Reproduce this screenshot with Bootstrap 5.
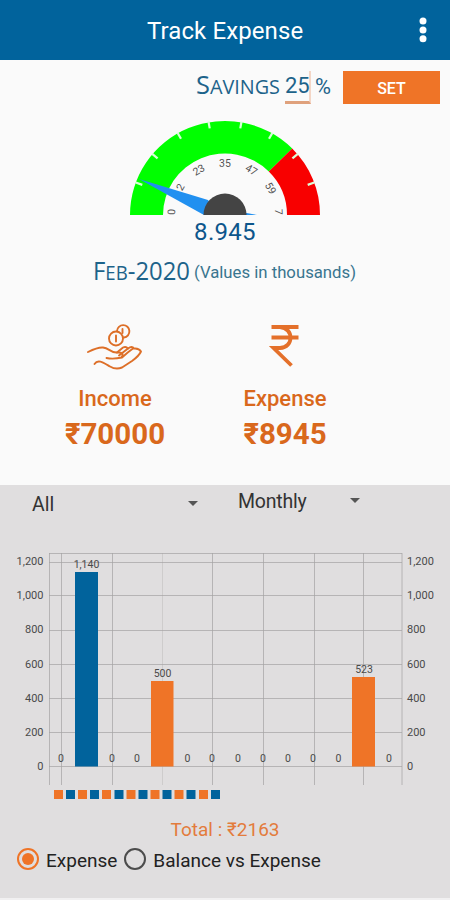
<!DOCTYPE html>
<html lang="en">
<head>
<meta charset="utf-8">
<meta name="viewport" content="width=device-width, initial-scale=1">
<title>Track Expense</title>
<link rel="stylesheet" href="https://cdn.jsdelivr.net/npm/bootstrap@5.3.0/dist/css/bootstrap.min.css">
<style>
:root { --blue: #01639c; --orange: #ef7427; --ink: #d9681c; }
body { font-family: Roboto, "Noto Sans", sans-serif; background: #fafafa; width: 450px; height: 900px; overflow: hidden; line-height: 1; }
svg { display: block; flex: none; overflow: visible; }
.appbar { height: 60px; background: var(--blue); padding: 0 22px 0 147px; }
.appbar h1 { font-size: 24px; letter-spacing: .1px; line-height: 60px; padding-top: 1px; }
.summary { height: 425px; background: #fafafa; }
.savings { height: 54px; padding-right: 10px; color: #1d638a; }
.caps { font-size: 25px; font-family: "Open Sans", sans-serif; fill: #1d638a; }
.caps-low { font-size: 19.5px; text-transform: uppercase; }
.pct-field { width: 26px; height: 33px; border-bottom: 3px solid #dfa17c; border-right: 2px solid #f4d6c6; font-size: 22px; line-height: 29px; margin: 1px 4px 0 5px; }
.btn-set { width: 97px; height: 33px; background: var(--orange); color: #fff; font-size: 16px; font-weight: 500; line-height: 1; margin-left: 11px; }
.btn-set:hover { background: #dd6519; color: #fff; }
.reading { font-size: 24px; letter-spacing: .3px; color: #0d568b; line-height: 24px; margin-top: 5px; }
.period { height: 36px; margin-top: 9px; color: #1d638a; }
.totals { margin-top: 36px; color: var(--ink); width: 370px; padding-left: 30px; }
.total-name { font-size: 22px; font-weight: 500; line-height: 26px; margin-top: 13px; }
.total-sum { font-size: 29.500px; font-weight: 700; line-height: 34px; margin-top: 5px; }
.report { height: 415px; background: #e0dedf; border-bottom: 2px solid #f1f0f1; }
.filters { height: 45px; padding-left: 32px; color: #333; font-size: 19.5px; }
.pick-all { width: 166px; padding-top: 10px; }
.pick-span { width: 122px; padding-top: 7px; margin-left: 40px; }
.pick-span span { letter-spacing: -.2px; }
.caret { width: 0; height: 0; border: 5.5px solid transparent; border-top-color: #555; border-bottom: 0; margin-top: 6px; }
.grand { font-size: 19px; line-height: 24px; color: #e37b3c; margin-top: 10px; }
.modes { height: 34px; padding-left: 17px; font-size: 19px; color: #222; }
.mode-name { margin-left: 7px; padding-top: 2px; }
.dot { width: 22px; height: 22px; border: 2px solid #4c4c4c; }
.dot-on { border: 2.5px solid var(--orange); }
.dot-on::after { content: ""; width: 12px; height: 12px; border-radius: 50%; background: var(--orange); }
</style>
</head>
<body>
<header class="appbar d-flex align-items-center justify-content-between text-white">
  <h1 class="fw-normal m-0">Track Expense</h1>
  <svg width="10" height="26" fill="#fff"><circle cx="5" cy="4" r="3.5"/><circle cx="5" cy="13" r="3.5"/><circle cx="5" cy="21.700" r="3.5"/></svg>
</header>

<section class="summary">
  <div class="savings d-flex align-items-center justify-content-end">
    <svg width="84" height="28"><text class="caps" x="0" y="21" textLength="84" lengthAdjust="spacingAndGlyphs">S<tspan class="caps-low">avings</tspan></text></svg>
    <div class="pct-field text-center">25</div>
    <svg width="17" height="24"><text x="0" y="19" font-size="22" textLength="16" lengthAdjust="spacingAndGlyphs" fill="#1d638a">%</text></svg>
    <button class="btn btn-set rounded-0 border-0 p-0 pt-1" type="button">SET</button>
  </div>

  <svg class="mx-auto" width="210" height="101" viewBox="120 114 210 101">
    <path d="M130 215A95 94 0 0 1 292.200 148.500L268.800 171.500A62 61.500 0 0 0 163 215Z" fill="#0f0"/>
    <path d="M292.200 148.500A95 94 0 0 1 320 215H287A62 61.500 0 0 0 268.800 171.500Z" fill="#f80000"/>
    <g stroke="#d9ffd9" stroke-width="2.200">
      <path d="M130 215h7" transform="rotate(20 225 215)"/><path d="M130 215h7" transform="rotate(40 225 215)"/><path d="M130 215h7" transform="rotate(60 225 215)"/><path d="M130 215h7" transform="rotate(80 225 215)"/><path d="M130 215h7" transform="rotate(100 225 215)"/><path d="M130 215h7" transform="rotate(120 225 215)"/><path d="M130 215h7" transform="rotate(140 225 215)"/><path d="M130 215h7" transform="rotate(160 225 215)"/>
    </g>
    <g font-size="10.500" fill="#555" text-anchor="middle">
      <text transform="translate(175 212) rotate(-88)">0</text>
      <text transform="translate(183.500 189) rotate(-60)">2</text>
      <text transform="translate(200.500 173) rotate(-30)">23</text>
      <text transform="translate(225 166.500)">35</text>
      <text transform="translate(249.500 173) rotate(30)">47</text>
      <text transform="translate(267.500 190) rotate(60)">59</text>
      <text transform="translate(275 212) rotate(88)">7</text>
    </g>
    <path d="M139 179L208 200 220 215H204Z" fill="#2190f0"/>
    <path d="M244 212.500L257 215H244Z" fill="#2190f0"/>
    <path d="M203.500 215a21.500 21.500 0 0 1 43 0z" fill="#444"/>
  </svg>
  <div class="reading text-center">8.945</div>

  <div class="period d-flex align-items-center justify-content-center">
    <svg width="98" height="28"><text class="caps" x="0" y="23" textLength="97" lengthAdjust="spacingAndGlyphs">F<tspan class="caps-low">eb</tspan>-2020</text></svg>
    <svg width="166" height="28"><text x="3" y="21" font-size="17" textLength="162" lengthAdjust="spacingAndGlyphs" fill="#39758f">(Values in thousands)</text></svg>
  </div>

  <div class="totals d-flex text-center">
    <div class="w-50 d-flex flex-column align-items-center">
      <svg width="56" height="48" viewBox="87 325 56 48" fill="none" stroke="#dd6f28" stroke-width="1.900" stroke-linecap="round" stroke-linejoin="round">
        <circle cx="116" cy="338.500" r="7"/><path d="M117 331A6.200 6.200 0 1 1 124 337.500"/><path d="M116 335.500v6M122.500 329v4"/>
        <path d="M88 352C94 349 98 347 103 347.500C109 348 111 353 117 352.500L123 347.500Q126 346 128 348.500L119 355.500"/>
        <path d="M106.500 358Q113 359.500 122 357.500Q128 352 133 348.500M117 352.500Q125 352 121.500 357.500M128 348.500Q132 345.500 134 348.500M134 348.500Q139 348 141 351.500Q139 356 132 361L122 367.500Q116 370 110 366.500C104 363 98 358.500 94.500 364"/>
      </svg>
      <div class="total-name">Income</div>
      <div class="total-sum">₹70000</div>
    </div>
    <div class="w-50 d-flex flex-column align-items-center">
      <svg width="30" height="48" viewBox="270 325 30 48" fill="none" stroke="#e4702a" stroke-width="3.800">
        <path d="M271.500 327H298.500M271.500 337.500H298.500M271.500 327H280C294 328 294 347.500 280 348H273.500L291.500 365.500"/>
      </svg>
      <div class="total-name">Expense</div>
      <div class="total-sum">₹8945</div>
    </div>
  </div>
</section>

<section class="report">
  <div class="filters d-flex">
    <div class="pick-all d-flex justify-content-between"><span>All</span><i class="caret"></i></div>
    <div class="pick-span d-flex justify-content-between"><span>Monthly</span><i class="caret"></i></div>
  </div>
  <svg width="450" height="278" viewBox="0 530 450 278">
    <g stroke="#a4a2a3" stroke-opacity=".7" stroke-width="1">
      <path fill="none" d="M49 553.500H402M49 562.500H402M49 595.500H402M49 630.500H402M49 664.500H402M49 698.500H402M49 732.500H402M49 766.500H402M49.500 553V785M61.500 553V785M112.500 553V785M212.500 553V785M263.500 553V785M314.500 553V785M363.500 553V785M402 553V785"/>
      <path d="M162.500 553V785" stroke-opacity=".3"/>
    </g>
    <path d="M75 572h23v194.500H75z" fill="#01639c"/>
    <path d="M151 681h22.500v85.500H151zM352 677h23v89.500H352z" fill="#ef7427"/>
    <g font-size="11" fill="#4a4a4a" text-anchor="end">
      <text x="43.500" y="565">1,200</text><text x="43.500" y="599">1,000</text><text x="43.500" y="633">800</text><text x="43.500" y="668">600</text><text x="43.500" y="702">400</text><text x="43.500" y="736">200</text><text x="43.500" y="770">0</text>
    </g>
    <g font-size="11" fill="#4a4a4a">
      <text x="407" y="565">1,200</text><text x="407" y="599">1,000</text><text x="407" y="633">800</text><text x="407" y="668">600</text><text x="407" y="702">400</text><text x="407" y="736">200</text><text x="407" y="770">0</text>
    </g>
    <g font-size="10.500" fill="#4a4a4a" text-anchor="middle">
      <text x="86.500" y="567.500">1,140</text><text x="162.500" y="677">500</text><text x="364" y="672.500">523</text>
      <text x="61" y="761.500">0</text><text x="112" y="761.500">0</text><text x="137" y="761.500">0</text><text x="187.500" y="761.500">0</text><text x="212" y="761.500">0</text><text x="238" y="761.500">0</text><text x="263" y="761.500">0</text><text x="288" y="761.500">0</text><text x="313" y="761.500">0</text><text x="338.500" y="761.500">0</text><text x="389" y="761.500">0</text>
    </g>
    <path fill="#ef7427" d="M54 790h9v9h-9zM78 790h9v9h-9zM102 790h9v9h-9zM126.500 790h9v9h-9zM150.500 790h9v9h-9zM174.500 790h9v9h-9zM199 790h9v9h-9z"/>
    <path fill="#01639c" d="M66 790h9v9h-9zM90 790h9v9h-9zM114.500 790h9v9h-9zM138.500 790h9v9h-9zM162.500 790h9v9h-9zM186.500 790h9v9h-9zM211 790h9v9h-9z"/>
  </svg>
  <div class="grand text-center">Total : ₹2163</div>
  <div class="modes d-flex align-items-center">
    <span class="dot dot-on rounded-circle d-flex align-items-center justify-content-center"></span><span class="mode-name">Expense</span>
    <span class="dot rounded-circle mode-name"></span><span class="mode-name">Balance vs Expense</span>
  </div>
</section>
<script src="https://cdn.jsdelivr.net/npm/bootstrap@5.3.0/dist/js/bootstrap.bundle.min.js"></script>
</body>
</html>
